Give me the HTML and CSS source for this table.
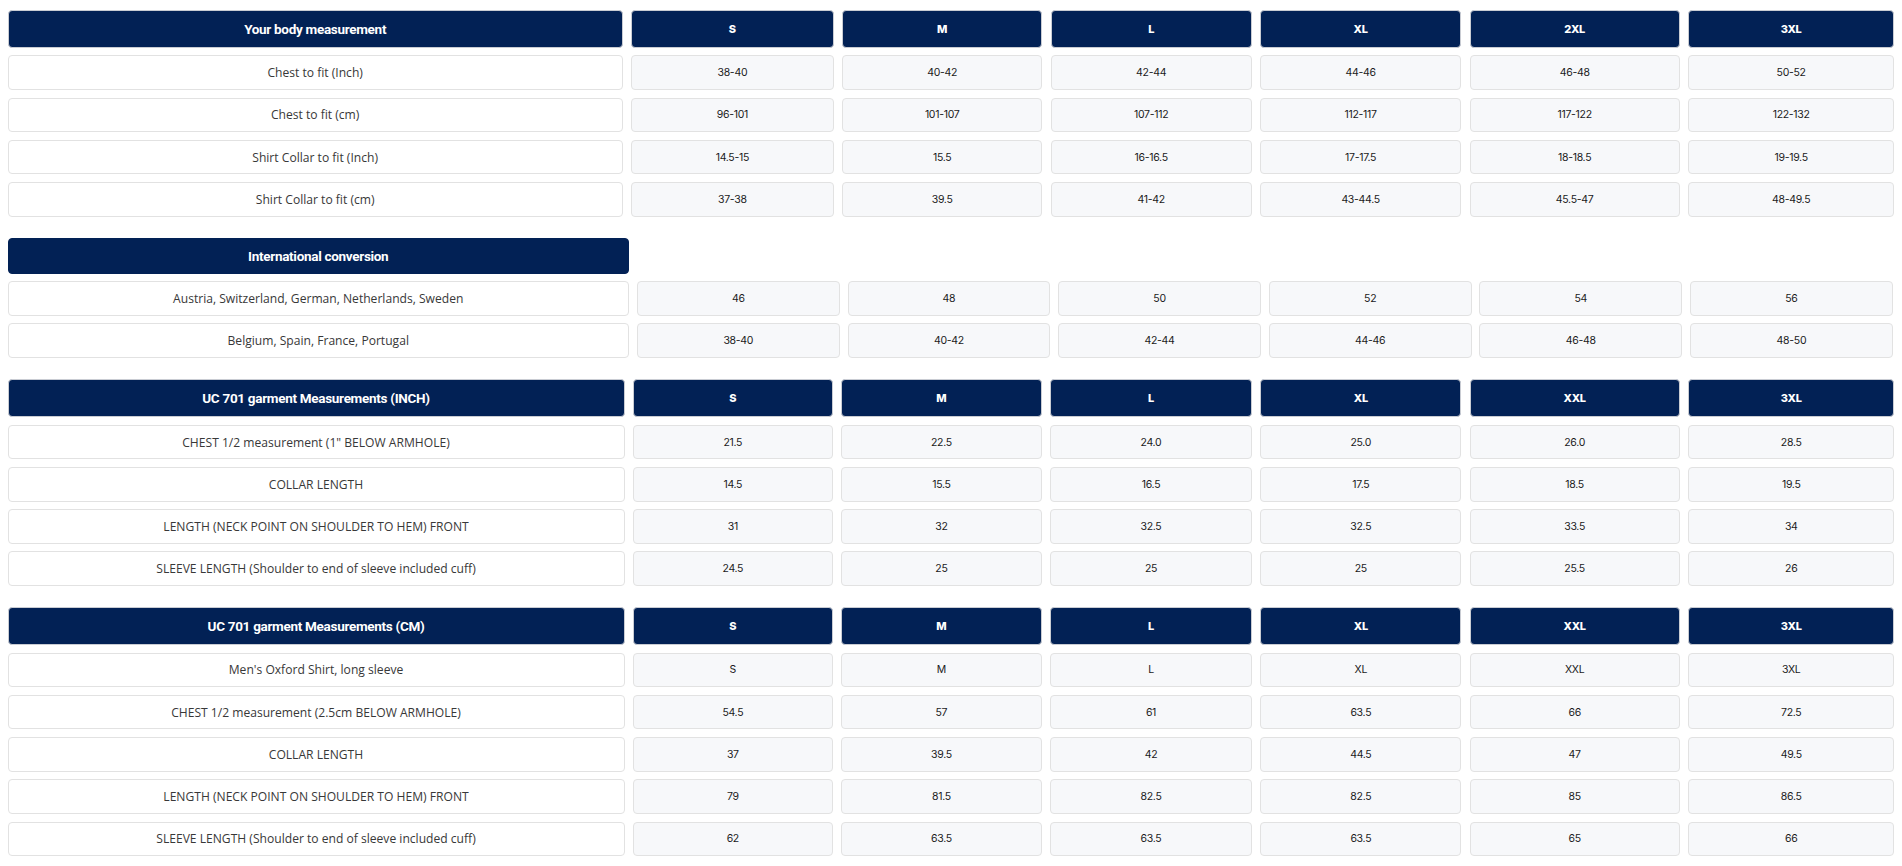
FILE: index.html
```html
<!DOCTYPE html>
<html lang="en">
<head>
<meta charset="utf-8">
<title>Size chart</title>
<link rel="stylesheet" href="styles.css">
</head>
<body>
<main class="page">
  <section class="chart chart-body">
    <div class="cell head head-label">Your body measurement</div>
    <div class="cell head">S</div><div class="cell head">M</div><div class="cell head">L</div><div class="cell head">XL</div><div class="cell head">2XL</div><div class="cell head">3XL</div>

    <div class="cell label">Chest to fit (Inch)</div>
    <div class="cell val">38-40</div><div class="cell val">40-42</div><div class="cell val">42-44</div><div class="cell val">44-46</div><div class="cell val">46-48</div><div class="cell val">50-52</div>

    <div class="cell label">Chest to fit (cm)</div>
    <div class="cell val">96-101</div><div class="cell val">101-107</div><div class="cell val">107-112</div><div class="cell val">112-117</div><div class="cell val">117-122</div><div class="cell val">122-132</div>

    <div class="cell label">Shirt Collar to fit (Inch)</div>
    <div class="cell val">14.5-15</div><div class="cell val">15.5</div><div class="cell val">16-16.5</div><div class="cell val">17-17.5</div><div class="cell val">18-18.5</div><div class="cell val">19-19.5</div>

    <div class="cell label">Shirt Collar to fit (cm)</div>
    <div class="cell val">37-38</div><div class="cell val">39.5</div><div class="cell val">41-42</div><div class="cell val">43-44.5</div><div class="cell val">45.5-47</div><div class="cell val">48-49.5</div>
  </section>

  <section class="chart chart-intl">
    <div class="cell head head-label head-short">International conversion</div>
    <div class="spacer"></div><div class="spacer"></div><div class="spacer"></div><div class="spacer"></div><div class="spacer"></div><div class="spacer"></div>

    <div class="cell label">Austria, Switzerland, German, Netherlands, Sweden</div>
    <div class="cell val">46</div><div class="cell val">48</div><div class="cell val">50</div><div class="cell val">52</div><div class="cell val">54</div><div class="cell val">56</div>

    <div class="cell label">Belgium, Spain, France, Portugal</div>
    <div class="cell val">38-40</div><div class="cell val">40-42</div><div class="cell val">42-44</div><div class="cell val">44-46</div><div class="cell val">46-48</div><div class="cell val">48-50</div>
  </section>

  <section class="chart chart-garment">
    <div class="cell head head-label">UC 701 garment Measurements (INCH)</div>
    <div class="cell head">S</div><div class="cell head">M</div><div class="cell head">L</div><div class="cell head">XL</div><div class="cell head">XXL</div><div class="cell head">3XL</div>

    <div class="cell label">CHEST 1/2 measurement (1" BELOW ARMHOLE)</div>
    <div class="cell val">21.5</div><div class="cell val">22.5</div><div class="cell val">24.0</div><div class="cell val">25.0</div><div class="cell val">26.0</div><div class="cell val">28.5</div>

    <div class="cell label">COLLAR LENGTH</div>
    <div class="cell val">14.5</div><div class="cell val">15.5</div><div class="cell val">16.5</div><div class="cell val">17.5</div><div class="cell val">18.5</div><div class="cell val">19.5</div>

    <div class="cell label">LENGTH (NECK POINT ON SHOULDER TO HEM) FRONT</div>
    <div class="cell val">31</div><div class="cell val">32</div><div class="cell val">32.5</div><div class="cell val">32.5</div><div class="cell val">33.5</div><div class="cell val">34</div>

    <div class="cell label">SLEEVE LENGTH (Shoulder to end of sleeve included cuff)</div>
    <div class="cell val">24.5</div><div class="cell val">25</div><div class="cell val">25</div><div class="cell val">25</div><div class="cell val">25.5</div><div class="cell val">26</div>
  </section>

  <section class="chart chart-garment">
    <div class="cell head head-label">UC 701 garment Measurements (CM)</div>
    <div class="cell head">S</div><div class="cell head">M</div><div class="cell head">L</div><div class="cell head">XL</div><div class="cell head">XXL</div><div class="cell head">3XL</div>

    <div class="cell label">Men's Oxford Shirt, long sleeve</div>
    <div class="cell val">S</div><div class="cell val">M</div><div class="cell val">L</div><div class="cell val">XL</div><div class="cell val">XXL</div><div class="cell val">3XL</div>

    <div class="cell label">CHEST 1/2 measurement (2.5cm BELOW ARMHOLE)</div>
    <div class="cell val">54.5</div><div class="cell val">57</div><div class="cell val">61</div><div class="cell val">63.5</div><div class="cell val">66</div><div class="cell val">72.5</div>

    <div class="cell label">COLLAR LENGTH</div>
    <div class="cell val">37</div><div class="cell val">39.5</div><div class="cell val">42</div><div class="cell val">44.5</div><div class="cell val">47</div><div class="cell val">49.5</div>

    <div class="cell label">LENGTH (NECK POINT ON SHOULDER TO HEM) FRONT</div>
    <div class="cell val">79</div><div class="cell val">81.5</div><div class="cell val">82.5</div><div class="cell val">82.5</div><div class="cell val">85</div><div class="cell val">86.5</div>

    <div class="cell label">SLEEVE LENGTH (Shoulder to end of sleeve included cuff)</div>
    <div class="cell val">62</div><div class="cell val">63.5</div><div class="cell val">63.5</div><div class="cell val">63.5</div><div class="cell val">65</div><div class="cell val">66</div>
  </section>
</main>
</body>
</html>
```

FILE: styles.css
```css
* {
  box-sizing: border-box;
}

html, body {
  margin: 0;
  padding: 0;
  background: #ffffff;
}

body {
  font-family: "Open Sans", "Liberation Sans", Arial, sans-serif;
  color: #333333;
}

.page {
  display: flex;
  flex-direction: column;
  gap: 21.3px;
  padding: 10px 7px 0 7.5px;
}

.chart {
  display: grid;
  row-gap: 7.65px;
  grid-auto-rows: 34.6px;
}

.chart-body {
  grid-template-columns: 615.3px 202.6px 200.5px 201px 201.5px 210px 206.5px;
  column-gap: 8.25px;
  grid-template-rows: 37.7px;
}

.chart-intl {
  grid-template-columns: 621.5px repeat(6, 202.7px);
  column-gap: 7.95px;
  grid-template-rows: 35.7px;
}

.chart-garment {
  grid-template-columns: 617px 200px 200.5px 202px 201px 210px 206.5px;
  column-gap: 8.33px;
  grid-template-rows: 37.7px;
}

.cell {
  display: flex;
  align-items: center;
  justify-content: center;
  text-align: center;
  border: 1px solid #e2e2e2;
  border-radius: 4px;
}

.head {
  background: #022155;
  border-color: #c9ccd3;
  color: #ffffff;
  font-family: Inter, "Liberation Sans", Arial, sans-serif;
  font-weight: 800;
  font-size: 11px;
  letter-spacing: -0.2px;
}

.head-label {
  font-family: Roboto, "Liberation Sans", Arial, sans-serif;
  font-weight: 700;
  font-size: 13.5px;
  letter-spacing: -0.3px;
}

.head-short {
  border-color: #022155;
}

.label {
  background: #ffffff;
  font-size: 12.1px;
  color: #383838;
}

.val {
  background: #f7f8fa;
  font-family: Inter, "Liberation Sans", Arial, sans-serif;
  font-size: 10.5px;
  font-weight: 400;
  letter-spacing: -0.3px;
  color: #1a1a1a;
}

.spacer {
  background: transparent;
}
```
